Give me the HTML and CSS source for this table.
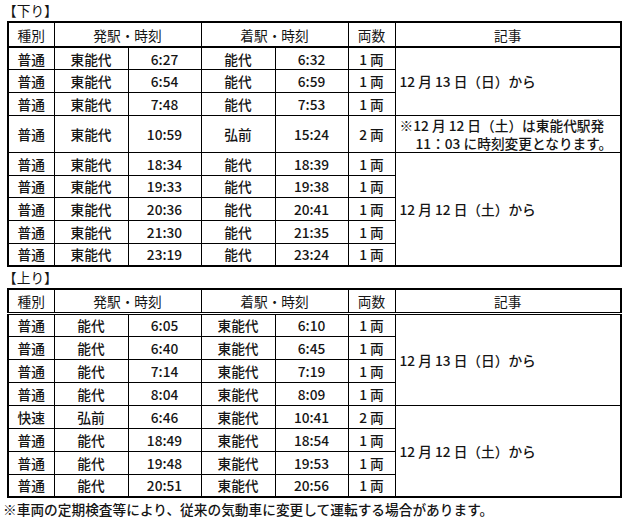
FILE: index.html
```html
<!DOCTYPE html>
<html lang="ja">
<head>
<meta charset="utf-8">
<title>時刻表</title>
<link rel="stylesheet" href="styles.css">
</head>
<body>
<div class="page">
  <div class="title">【下り】</div>
  <table class="tt down">
    <colgroup>
      <col class="c-type"><col class="c-st"><col class="c-tm"><col class="c-st"><col class="c-tm"><col class="c-cars"><col class="c-note">
    </colgroup>
    <thead>
      <tr><th>種別</th><th colspan="2">発駅・時刻</th><th colspan="2">着駅・時刻</th><th>両数</th><th>記事</th></tr>
    </thead>
    <tbody>
      <tr><td>普通</td><td>東能代</td><td>6:27</td><td>能代</td><td>6:32</td><td>1 両</td><td class="note" rowspan="3">12 月 13 日（日）から</td></tr>
      <tr><td>普通</td><td>東能代</td><td>6:54</td><td>能代</td><td>6:59</td><td>1 両</td></tr>
      <tr><td>普通</td><td>東能代</td><td>7:48</td><td>能代</td><td>7:53</td><td>1 両</td></tr>
      <tr class="tall"><td>普通</td><td>東能代</td><td>10:59</td><td>弘前</td><td>15:24</td><td>2 両</td><td class="note"><span class="l1">※12 月 12 日（土）は東能代駅発</span><span class="l2">11：03 に時刻変更となります。</span></td></tr>
      <tr><td>普通</td><td>東能代</td><td>18:34</td><td>能代</td><td>18:39</td><td>1 両</td><td class="note" rowspan="5">12 月 12 日（土）から</td></tr>
      <tr><td>普通</td><td>東能代</td><td>19:33</td><td>能代</td><td>19:38</td><td>1 両</td></tr>
      <tr><td>普通</td><td>東能代</td><td>20:36</td><td>能代</td><td>20:41</td><td>1 両</td></tr>
      <tr><td>普通</td><td>東能代</td><td>21:30</td><td>能代</td><td>21:35</td><td>1 両</td></tr>
      <tr><td>普通</td><td>東能代</td><td>23:19</td><td>能代</td><td>23:24</td><td>1 両</td></tr>
    </tbody>
  </table>

  <div class="title">【上り】</div>
  <table class="tt up">
    <colgroup>
      <col class="c-type"><col class="c-st"><col class="c-tm"><col class="c-st"><col class="c-tm"><col class="c-cars"><col class="c-note">
    </colgroup>
    <thead>
      <tr><th>種別</th><th colspan="2">発駅・時刻</th><th colspan="2">着駅・時刻</th><th>両数</th><th>記事</th></tr>
    </thead>
    <tbody>
      <tr><td>普通</td><td>能代</td><td>6:05</td><td>東能代</td><td>6:10</td><td>1 両</td><td class="note" rowspan="4">12 月 13 日（日）から</td></tr>
      <tr><td>普通</td><td>能代</td><td>6:40</td><td>東能代</td><td>6:45</td><td>1 両</td></tr>
      <tr><td>普通</td><td>能代</td><td>7:14</td><td>東能代</td><td>7:19</td><td>1 両</td></tr>
      <tr><td>普通</td><td>能代</td><td>8:04</td><td>東能代</td><td>8:09</td><td>1 両</td></tr>
      <tr><td>快速</td><td>弘前</td><td>6:46</td><td>東能代</td><td>10:41</td><td>2 両</td><td class="note" rowspan="4">12 月 12 日（土）から</td></tr>
      <tr><td>普通</td><td>能代</td><td>18:49</td><td>東能代</td><td>18:54</td><td>1 両</td></tr>
      <tr><td>普通</td><td>能代</td><td>19:48</td><td>東能代</td><td>19:53</td><td>1 両</td></tr>
      <tr><td>普通</td><td>能代</td><td>20:51</td><td>東能代</td><td>20:56</td><td>1 両</td></tr>
    </tbody>
  </table>
  <p class="footnote">※車両の定期検査等により、従来の気動車に変更して運転する場合があります。</p>
</div>
</body>
</html>
```

FILE: styles.css
```css
html, body {
  margin: 0;
  padding: 0;
  background: #fff;
}

.page {
  width: 627px;
  font-family: "Noto Sans CJK JP", sans-serif;
  font-size: 13.7px;
  font-weight: 400;
  color: #151515;
}

.title {
  height: 21px;
  line-height: 20px;
  padding-left: 3px;
}

.tt {
  border-collapse: collapse;
  table-layout: fixed;
  width: 613px;
  margin-left: 7px;
  border: 2px solid #000;
}

.c-type { width: 46px; }
.c-st { width: 74px; }
.c-tm { width: 73px; }
.c-cars { width: 47px; }
.c-note { width: 226px; }

.tt th,
.tt td {
  border: 1px solid #000;
  padding: 0;
  text-align: center;
  line-height: 16px;
  white-space: nowrap;
}

.tt th {
  font-weight: 400;
}

.tt td {
  font-weight: 500;
}

.tt td.note {
  text-align: left;
  padding-left: 4px;
}

.down thead tr { height: 25px; }
.down thead th { border-bottom: 2px solid #000; }
.down tbody tr { height: 22.75px; }
.down tbody tr.tall { height: 37px; }

.up thead tr { height: 24px; }
.up thead th { border-bottom: 3px double #000; }
.up tbody tr { height: 23px; }

.note .l1,
.note .l2 {
  display: block;
  line-height: 18px;
}

.note .l2 {
  padding-left: 16px;
}

.footnote {
  margin: 0;
  padding-left: 3px;
  line-height: 22px;
  font-weight: 500;
}
```
